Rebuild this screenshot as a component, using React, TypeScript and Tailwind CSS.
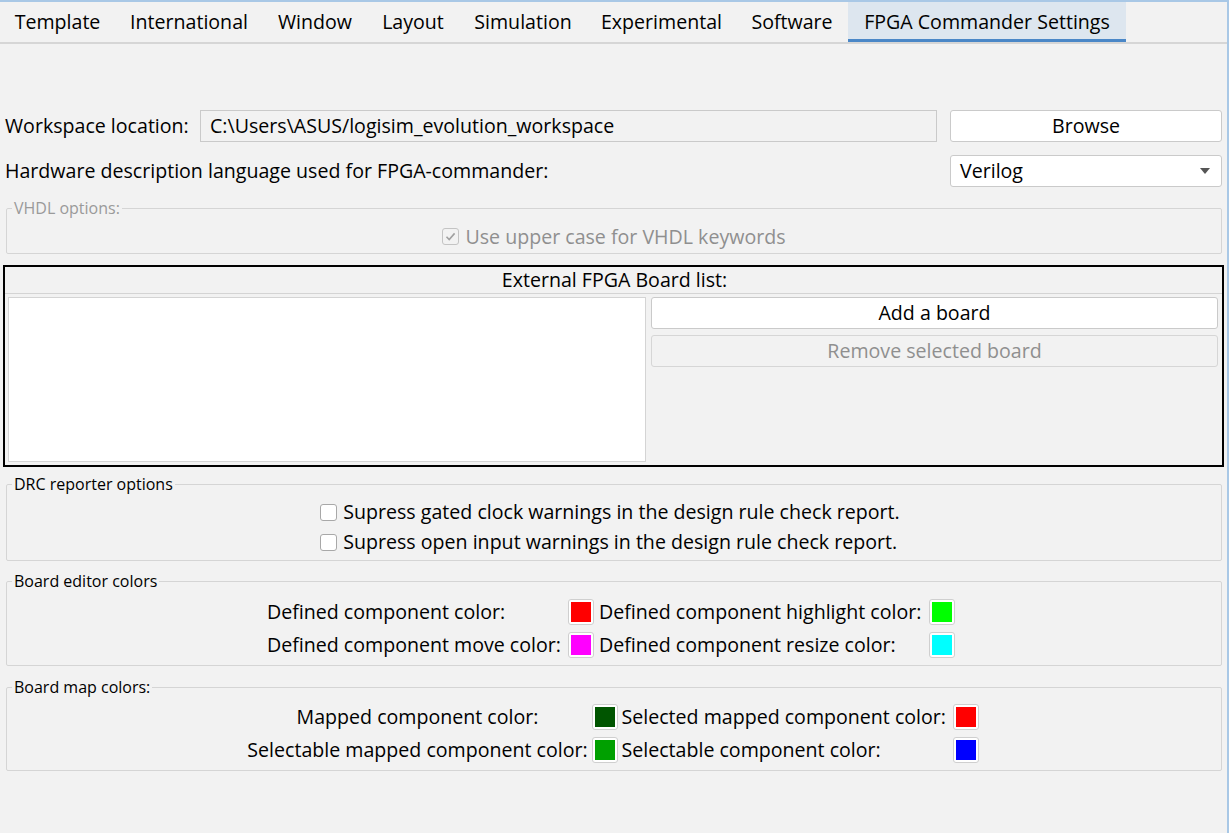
import type { ReactNode } from 'react';

const tabs = [
  { label: 'Template', w: 'w-[115px]' },
  { label: 'International', w: 'w-[148px]' },
  { label: 'Window', w: 'w-[104px]' },
  { label: 'Layout', w: 'w-[92px]' },
  { label: 'Simulation', w: 'w-[128px]' },
  { label: 'Experimental', w: 'w-[149px]' },
  { label: 'Software', w: 'w-[112px]' },
  { label: 'FPGA Commander Settings', w: 'w-[278px]', active: true },
];

function Group({
  title,
  disabled,
  className,
  children,
}: {
  title: string;
  disabled?: boolean;
  className: string;
  children: ReactNode;
}) {
  return (
    <fieldset
      className={`ml-[1px] rounded-[2px] border border-[#d5d5d5] ${className}`}
    >
      <legend
        className={`ml-[5px] px-[2px] text-[16px] leading-[20px] ${
          disabled ? 'text-[#9a9a9a]' : 'text-black'
        }`}
      >
        {title}
      </legend>
      {children}
    </fieldset>
  );
}

function CheckBox({ checked, disabled }: { checked?: boolean; disabled?: boolean }) {
  return (
    <span
      className={`flex h-[17px] w-[17px] shrink-0 items-center justify-center rounded-[3px] border ${
        disabled ? 'border-[#c4c4c4] bg-[#f2f2f2]' : 'border-[#a8a8a8] bg-white'
      }`}
    >
      {checked && (
        <svg width="13" height="13" viewBox="0 0 13 13">
          <path d="M2.5 6.8 L5.2 9.5 L10.6 3.4" fill="none" stroke="#a0a0a0" strokeWidth="1.6" />
        </svg>
      )}
    </span>
  );
}

function Swatch({ color }: { color: string }) {
  return (
    <span className="flex h-[26px] w-[26px] items-center justify-center rounded-[3px] border border-[#cfcfcf] bg-white">
      <span className={`h-[20px] w-[20px] ${color}`} />
    </span>
  );
}

function App() {
  return (
    <div className="flex h-[833px] w-full flex-col border-t-2 border-r-2 border-[#a9c8e6] bg-[#f2f2f2] font-['Open_Sans',sans-serif] text-[19.6px] text-black">
      {/* tab strip */}
      <div className="flex h-[42px] border-b-2 border-[#d6d6d6]">
        {tabs.map((t) => (
          <div
            key={t.label}
            className={`flex ${t.w} items-center justify-center whitespace-nowrap ${
              t.active ? 'border-b-[3px] border-[#4a87c7] bg-[#dde6ef] pt-[3px]' : ''
            }`}
          >
            {t.label}
          </div>
        ))}
      </div>

      <div className="flex flex-col px-[5px] pt-[66px]">
        {/* workspace */}
        <div className="flex h-[32px] items-center">
          <span className="w-[195px] whitespace-nowrap">Workspace location:</span>
          <div className="flex h-[32px] w-[737px] items-center border border-[#cacaca] bg-[#f2f2f2] px-[9px]">
            C:\Users\ASUS/logisim_evolution_workspace
          </div>
          <button className="ml-auto h-[32px] w-[272px] rounded-[3px] border border-[#cacaca] bg-white">
            Browse
          </button>
        </div>

        {/* HDL */}
        <div className="mt-[13px] flex h-[32px] items-center">
          <span>Hardware description language used for FPGA-commander:</span>
          <div className="ml-auto flex h-[32px] w-[272px] items-center justify-between rounded-[3px] border border-[#cacaca] bg-white pl-[9px] pr-[11px]">
            <span>Verilog</span>
            <svg width="10" height="6" viewBox="0 0 10 6">
              <path d="M0 0 H10 L5 6 Z" fill="#555" />
            </svg>
          </div>
        </div>

        {/* VHDL options */}
        <Group title="VHDL options:" disabled className="mt-[11px] h-[56px]">
          <div className="mt-[4px] flex items-center justify-center gap-[6px] text-[#8f8f8f]">
            <CheckBox checked disabled />
            <span>Use upper case for VHDL keywords</span>
          </div>
        </Group>

        {/* external boards */}
        <div className="-mx-[2px] mt-[11px] flex h-[202px] flex-col border-2 border-black">
          <div className="flex h-[27px] items-center justify-center border-b border-[#d4d4d4] pl-[2px]">
            External FPGA Board list:
          </div>
          <div className="flex flex-1 gap-[5px] px-[3px] pt-[3px] pb-[3px]">
            <div className="w-[638px] border border-[#d4d4d4] bg-white" />
            <div className="flex flex-1 flex-col gap-[6px] pr-[1px]">
              <button className="h-[32px] rounded-[3px] border border-[#cacaca] bg-white">
                Add a board
              </button>
              <button className="h-[32px] rounded-[3px] border border-[#d6d6d6] bg-[#f2f2f2] text-[#8f8f8f]">
                Remove selected board
              </button>
            </div>
          </div>
        </div>

        {/* DRC */}
        <Group title="DRC reporter options" className="mt-[7px] h-[87px]">
          <div className="flex justify-center pt-[3px] pr-[8px]">
            <div className="flex flex-col">
              {[
                'Supress gated clock warnings in the design rule check report.',
                'Supress open input warnings in the design rule check report.',
              ].map((s) => (
                <div key={s} className="flex h-[30px] items-center gap-[6px]">
                  <CheckBox />
                  <span className="whitespace-nowrap">{s}</span>
                </div>
              ))}
            </div>
          </div>
        </Group>

        {/* board editor colors */}
        <Group title="Board editor colors" className="mt-[10px] h-[95px]">
          <div className="flex justify-center pt-[4px] pr-[6px]">
            <div className="grid grid-cols-[301px_31px_330px_26px] items-center whitespace-nowrap">
              <span className="flex h-[33px] items-center">Defined component color:</span>
              <Swatch color="bg-[#ff0000]" />
              <span>Defined component highlight color:</span>
              <Swatch color="bg-[#00ff00]" />
              <span className="flex h-[33px] items-center">Defined component move color:</span>
              <Swatch color="bg-[#ff00ff]" />
              <span>Defined component resize color:</span>
              <Swatch color="bg-[#00ffff]" />
            </div>
          </div>
        </Group>

        {/* board map colors */}
        <Group title="Board map colors:" className="mt-[11px] h-[94px]">
          <div className="flex justify-center pt-[3px] pr-[6px]">
            <div className="grid grid-cols-[348px_30px_331px_26px] items-center whitespace-nowrap">
              <span className="flex h-[33px] items-center justify-center">Mapped component color:</span>
              <Swatch color="bg-[#005500]" />
              <span>Selected mapped component color:</span>
              <Swatch color="bg-[#ff0000]" />
              <span className="flex h-[33px] items-center justify-center">
                Selectable mapped component color:
              </span>
              <Swatch color="bg-[#00a000]" />
              <span>Selectable component color:</span>
              <Swatch color="bg-[#0000ff]" />
            </div>
          </div>
        </Group>
      </div>
    </div>
  );
}

export default App;
